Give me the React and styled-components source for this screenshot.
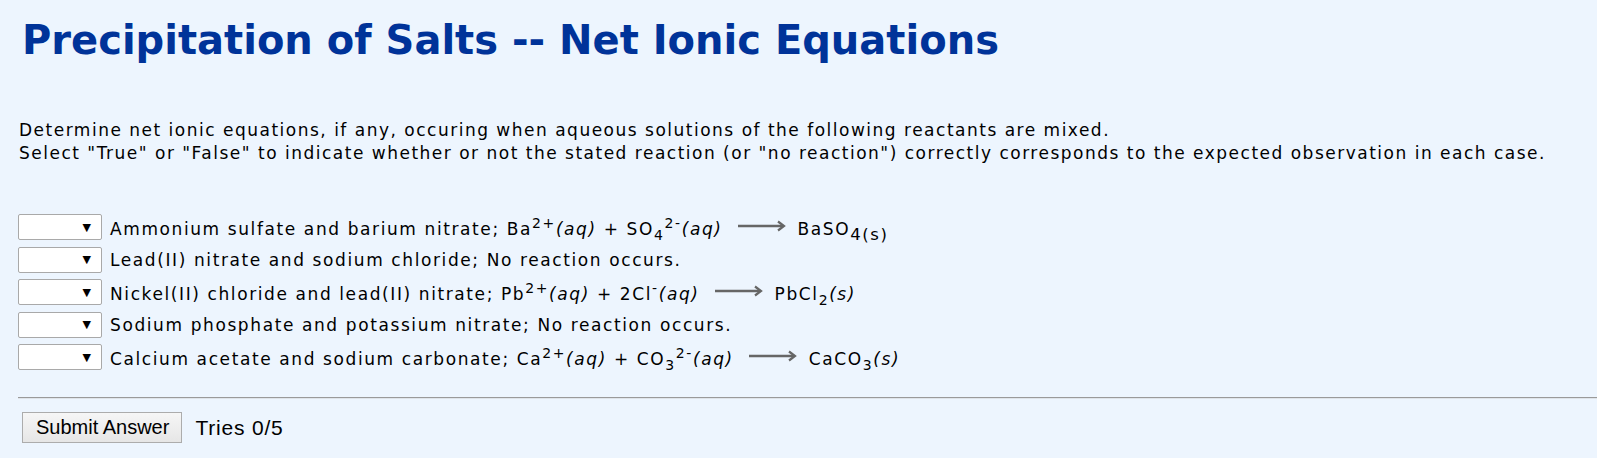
import React from "react";
import styled, { createGlobalStyle } from "styled-components";

const GlobalStyle = createGlobalStyle`
  html, body {
    margin: 0;
    padding: 0;
    background: #edf5fe;
  }
  body {
    font-family: "DejaVu Sans", Verdana, sans-serif;
    color: #000;
    overflow: hidden;
  }
`;

const Page = styled.div`
  padding: 16px 0 0 19px;
`;

const Title = styled.h1`
  margin: 0 0 0 3px;
  font-family: "DejaVu Sans", Verdana, sans-serif;
  font-weight: bold;
  font-size: 40px;
  line-height: 48px;
  color: #003399;
`;

const Intro = styled.p`
  margin: 54.5px 0 0 0;
  font-size: 17px;
  line-height: 23.5px;
  letter-spacing: 1.5px;
`;

const Questions = styled.div`
  display: flex;
  flex-direction: column;
  gap: 6.5px;
  margin-top: 48.5px;
  margin-left: -1px;
`;

const Row = styled.div`
  display: flex;
  align-items: center;
  gap: 8px;
  font-size: 17px;
  letter-spacing: 1.6px;
`;

const Picker = styled.span`
  box-sizing: border-box;
  display: flex;
  align-items: center;
  justify-content: flex-end;
  width: 84px;
  height: 26px;
  padding-right: 10px;
  background: #fff;
  border: 1px solid #a9a9a9;
  border-radius: 2px;
  font-size: 11px;
  letter-spacing: 0;
  flex-shrink: 0;
`;

const Statement = styled.span`
  white-space: nowrap;
`;

const Phase = styled.i`
  font-style: italic;
`;

const Sup = styled.sup`
  font-size: 14px;
  line-height: 0;
  vertical-align: 7px;
`;

const Sub = styled.sub`
  font-size: ${(p) => (p.$full ? "16.5px" : "14px")};
  line-height: 0;
  vertical-align: -5px;
`;

const ArrowWrap = styled.span`
  display: inline-block;
  margin: 0 12px 0 15px;
  vertical-align: 3px;
`;

const Divider = styled.hr`
  margin: 27px 0 0 -1px;
  border: 0;
  border-top: 1px solid #9a9a9a;
  border-bottom: 1px solid #dfe4ea;
`;

const Footer = styled.div`
  display: flex;
  align-items: center;
  gap: 13px;
  margin: 13px 0 0 3px;
  font-family: "Liberation Sans", Arial, sans-serif;
`;

const SubmitButton = styled.button`
  box-sizing: border-box;
  height: 31px;
  padding: 0 12px 0 13px;
  font-family: "Liberation Sans", Arial, sans-serif;
  font-size: 20px;
  color: #000;
  background: linear-gradient(#f6f6f6, #e6e6e6);
  border: 1px solid #acacac;
  border-radius: 0;
`;

const Tries = styled.span`
  font-size: 21px;
  letter-spacing: 0.8px;
`;

const ReactionArrow = () => (
  <ArrowWrap>
    <svg width="48" height="12" viewBox="0 0 48 12">
      <line x1="0" y1="6" x2="45" y2="6" stroke="#666" strokeWidth="2.5" />
      <polyline
        points="40,1.5 46,6 40,10.5"
        fill="none"
        stroke="#666"
        strokeWidth="2.2"
      />
    </svg>
  </ArrowWrap>
);

const questions = [
  <>
    Ammonium sulfate and barium nitrate; Ba<Sup>2+</Sup>
    <Phase>(aq)</Phase> + SO<Sub>4</Sub>
    <Sup>2-</Sup>
    <Phase>(aq)</Phase>
    <ReactionArrow />
    BaSO<Sub $full>4(s)</Sub>
  </>,
  <>Lead(II) nitrate and sodium chloride; No reaction occurs.</>,
  <>
    Nickel(II) chloride and lead(II) nitrate; Pb<Sup>2+</Sup>
    <Phase>(aq)</Phase> + 2Cl<Sup>-</Sup>
    <Phase>(aq)</Phase>
    <ReactionArrow />
    PbCl<Sub>2</Sub>
    <Phase>(s)</Phase>
  </>,
  <>Sodium phosphate and potassium nitrate; No reaction occurs.</>,
  <>
    Calcium acetate and sodium carbonate; Ca<Sup>2+</Sup>
    <Phase>(aq)</Phase> + CO<Sub>3</Sub>
    <Sup>2-</Sup>
    <Phase>(aq)</Phase>
    <ReactionArrow />
    CaCO<Sub>3</Sub>
    <Phase>(s)</Phase>
  </>,
];

export default function App() {
  return (
    <>
      <GlobalStyle />
      <Page>
        <Title>Precipitation of Salts -- Net Ionic Equations</Title>
        <Intro>
          Determine net ionic equations, if any, occuring when aqueous
          solutions of the following reactants are mixed.
          <br />
          Select "True" or "False" to indicate whether or not the stated
          reaction (or "no reaction") correctly corresponds to the expected
          observation in each case.
        </Intro>
        <Questions>
          {questions.map((q, i) => (
            <Row key={i}>
              <Picker>▼</Picker>
              <Statement>{q}</Statement>
            </Row>
          ))}
        </Questions>
        <Divider />
        <Footer>
          <SubmitButton>Submit Answer</SubmitButton>
          <Tries>Tries 0/5</Tries>
        </Footer>
      </Page>
    </>
  );
}
